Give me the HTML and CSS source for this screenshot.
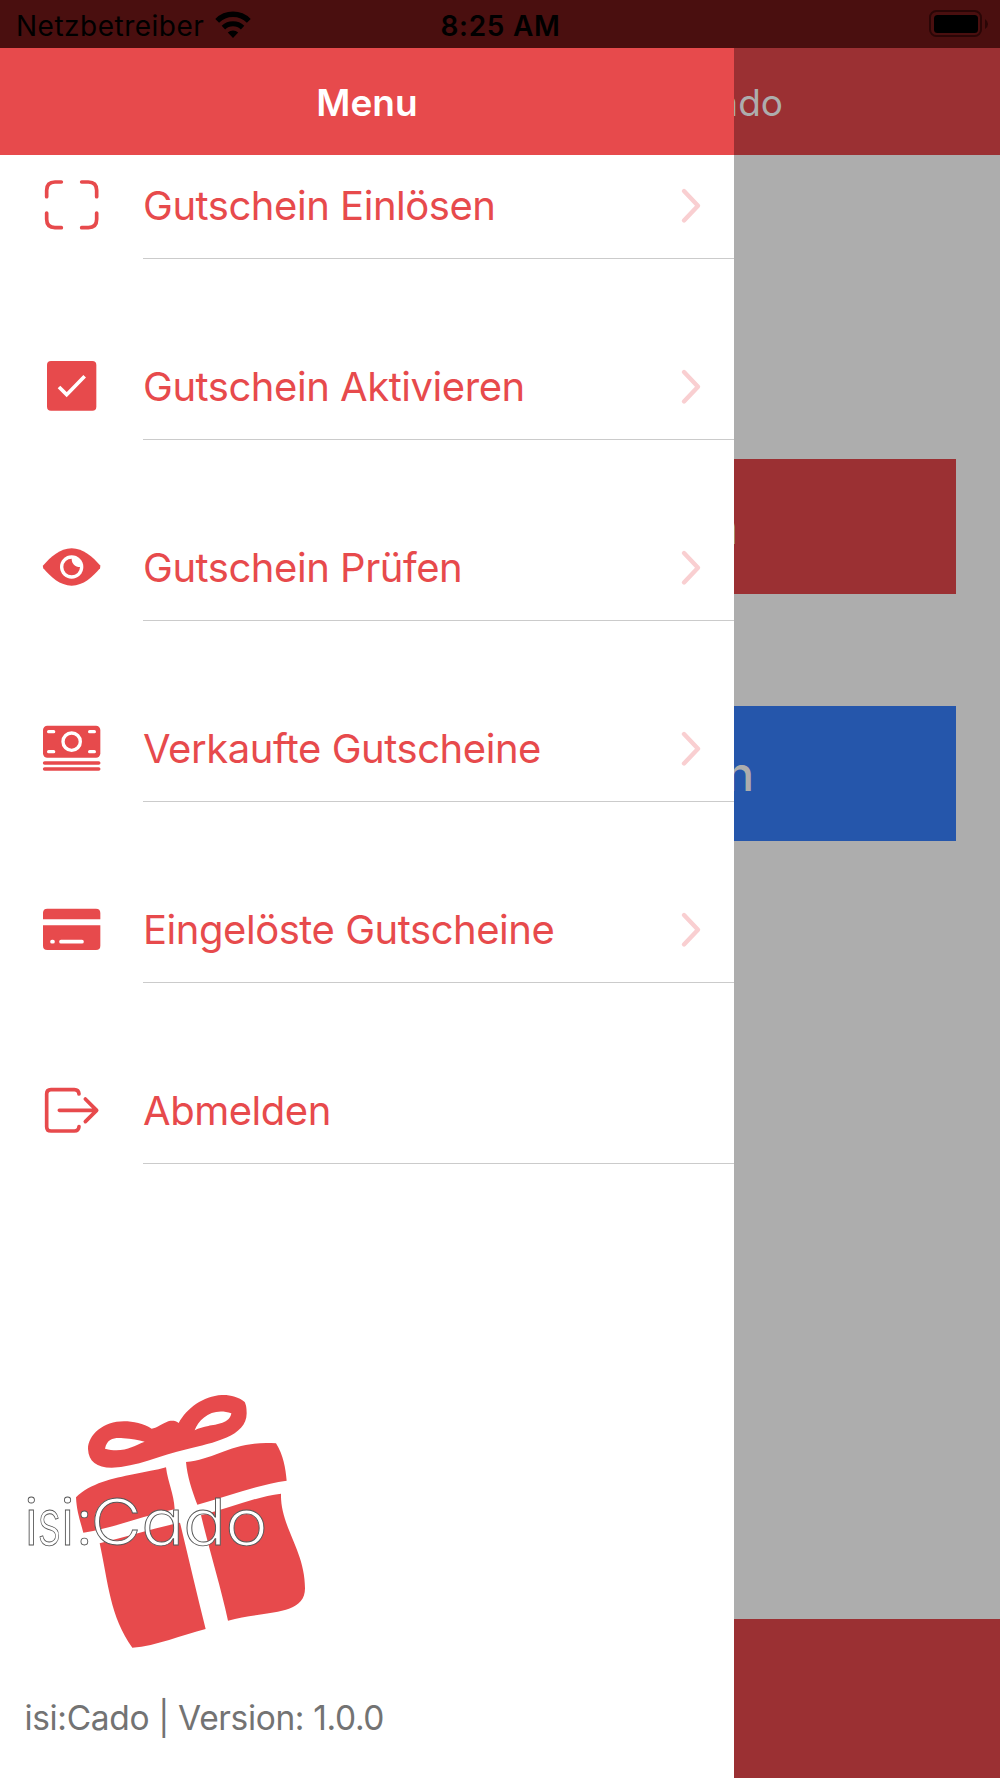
FILE: index.html
```
<!DOCTYPE html>
<html lang="de">
<head>
<meta charset="UTF-8">
<meta name="viewport" content="width=device-width, initial-scale=1.0">
<title>isi:Cado</title>
<link rel="stylesheet" href="styles.css">
</head>
<body>

<div class="statusbar">
    <div class="carrier">
        <span class="carrier-name">Netzbetreiber</span>
        <svg class="wifi" viewBox="0 0 36 27">
            <path d="M2.2 9.8a22.5 22.5 0 0 1 31.6 0" fill="none" stroke="#000" stroke-width="5.4"/>
            <path d="M8.4 16.6a14 14 0 0 1 19.2 0" fill="none" stroke="#000" stroke-width="5"/>
            <path d="M18 27l-5.2-5.4a7.6 7.6 0 0 1 10.4 0z"/>
        </svg>
    </div>
    <span class="clock">8:25 AM</span>
    <svg class="battery" viewBox="0 0 60 28">
        <rect x="1" y="1" width="51" height="25" rx="6.5" fill="none" stroke="#2a0606" stroke-width="2"/>
        <rect x="5" y="5" width="44" height="18" rx="3.5"/>
        <path d="M56 9v10q3-2 3-5t-3-5z" fill="#2a0606"/>
    </svg>
</div>

<div class="app">
    <div class="menu">
        <div class="menu-header">Menu</div>

        <ul class="menu-list">
            <li class="item">
                <svg class="icon" viewBox="120 53 192 192">
                    <path class="line" d="M140 124v-19q0-25 25-25h19M245 80h20q25 0 25 25v19M290 173v19q0 25-25 25h-20M184 217h-19q-25 0-25-25v-19"/>
                </svg>
                <div class="label"><span>Gutschein Einlösen</span><svg class="chevron" viewBox="0 0 24 40"><path d="M5 5l14 14.7L5 34.5"/></svg></div>
            </li>
            <li class="item">
                <svg class="icon" viewBox="120 596 192 192">
                    <rect x="141" y="617" width="148" height="149" rx="12"/>
                    <path class="cut" stroke-width="11" d="M177 695l23 23 54-55"/>
                </svg>
                <div class="label"><span>Gutschein Aktivieren</span><svg class="chevron" viewBox="0 0 24 40"><path d="M5 5l14 14.7L5 34.5"/></svg></div>
            </li>
            <li class="item">
                <svg class="icon" viewBox="120 44 192 192">
                    <path d="M130 135C152 110 180 84 215 84s63 26 85 51q2 5 0 9c-22 26-50 52-85 52s-63-26-85-52q-3-4 0-9z"/>
                    <circle cx="215" cy="140" r="35" fill="#fff"/>
                    <path d="M215 115c0 15 10 25 25 25a25 25 0 1 1-25-25z"/>
                </svg>
                <div class="label"><span>Gutschein Prüfen</span><svg class="chevron" viewBox="0 0 24 40"><path d="M5 5l14 14.7L5 34.5"/></svg></div>
            </li>
            <li class="item">
                <svg class="icon" viewBox="120 587 192 192">
                    <rect x="129" y="616" width="172" height="96" rx="13"/>
                    <circle cx="215" cy="664" r="26" fill="none" stroke="#fff" stroke-width="10"/>
                    <path class="cut" stroke-width="10" stroke-linecap="round" d="M146 634h15M269 634h14M146 694h15M269 694h14"/>
                    <path class="line" d="M134 728h162M134 746h162"/>
                </svg>
                <div class="label"><span>Verkaufte Gutscheine</span><svg class="chevron" viewBox="0 0 24 40"><path d="M5 5l14 14.7L5 34.5"/></svg></div>
            </li>
            <li class="item">
                <svg class="icon" viewBox="120 50 192 192">
                    <path d="M129 117V98q0-13 13-13h146q13 0 13 13v19zM129 135h172v61q0 13-13 13H142q-13 0-13-13z"/>
                    <path class="cut" stroke-width="11" stroke-linecap="round" d="M156 184h3M183 184h63"/>
                </svg>
                <div class="label"><span>Eingelöste Gutscheine</span><svg class="chevron" viewBox="0 0 24 40"><path d="M5 5l14 14.7L5 34.5"/></svg></div>
            </li>
            <li class="item">
                <svg class="icon" viewBox="120 594 192 192">
                    <path class="line" d="M237 642q-1-13-14-13h-70q-13 0-13 13v98q0 13 13 13h70q13 0 14-13M178 691h110M256 657l34 34-34 34"/>
                </svg>
                <div class="label"><span>Abmelden</span></div>
            </li>
        </ul>

        <svg class="logo" viewBox="0 0 1020 900">
            <!-- bow -->
            <path fill-rule="evenodd" d="M455 176C430 160 400 154 372 154C310 154 264 195 264 237C266 275 290 293 335 293C410 292 480 255 560 238C640 218 740 200 740 130C740 112 738 105 734 96C715 80 690 74 665 75C610 78 560 115 536 159C526 150 508 152 500 156C482 163 470 174 455 176Z
                M315 236C322 204 345 203 370 205C395 206 415 210 434 215C400 228 370 250 315 236Z
                M584 181C596 145 640 110 694 130C690 160 650 163 625 168C610 171 597 174 584 181Z"/>
            <!-- lid -->
            <path d="M228 382C270 340 340 325 400 313C435 305 470 301 498 292C504 340 522 370 524 418C430 437 350 472 250 488C240 450 230 425 228 382Z"/>
            <path d="M558 276C650 268 700 210 828 220C850 255 857 295 860 332C770 345 680 380 592 404C575 360 562 320 558 276Z"/>
            <!-- box -->
            <path d="M299 520C380 500 460 475 540 458C565 560 590 670 617 777C545 795 470 828 397 833C330 740 325 640 299 520Z"/>
            <path d="M603 436C690 415 765 380 843 371C840 470 915 540 915 655C915 740 790 722 684 752C662 650 628 540 603 436Z"/>
            <text class="logo-text" y="524"><tspan x="71">i</tspan><tspan x="112" textLength="72" lengthAdjust="spacingAndGlyphs">s</tspan><tspan x="180">i</tspan><tspan x="226">:</tspan><tspan x="271" textLength="154" lengthAdjust="spacingAndGlyphs">C</tspan><tspan x="423" textLength="130" lengthAdjust="spacingAndGlyphs">a</tspan><tspan x="549" textLength="130" lengthAdjust="spacingAndGlyphs">d</tspan><tspan x="676" textLength="128" lengthAdjust="spacingAndGlyphs">o</tspan></text>
        </svg>

        <div class="version"><span>isi:Cado | Version: 1.0.0</span></div>
    </div>

    <div class="page">
        <div class="page-header"><span>isi:Cado</span></div>
        <div class="page-content">
            <div class="button red"><span>n</span></div>
            <div class="button blue"><span>n</span></div>
        </div>
        <div class="page-footer"></div>
    </div>
</div>

</body>
</html>
```
FILE: styles.css
```
* {
    box-sizing: border-box;
}
body {
    margin: 0;
    width: 1000px;
    height: 1778px;
    overflow: hidden;
    font-family: Inter, "Liberation Sans", sans-serif;
    background-color: #fff;
}

/* Status bar */
.statusbar {
    display: grid;
    grid-template-columns: 1fr auto 1fr;
    align-items: center;
    height: 48px;
    padding: 0 11px 0 16px;
    background-color: #4a0f0f;
    color: #000;
    font-size: 28px;
}
.carrier {
    display: flex;
    align-items: center;
    gap: 11px;
}
.carrier-name {
    padding-top: 3px;
    letter-spacing: 0.5px;
}
.wifi {
    width: 36px;
    height: 27px;
}
.clock {
    padding-top: 3px;
    margin-left: -4px;
    font-weight: 600;
    letter-spacing: 0.7px;
}
.battery {
    width: 60px;
    height: 28px;
    justify-self: end;
}

.app {
    display: flex;
    height: 1730px;
}

/* Side menu */
.menu {
    width: 734px;
    flex: none;
    display: flex;
    flex-direction: column;
}
.menu-header {
    height: 106.5px;
    flex: none;
    background-color: #e74a4c;
    color: #fff;
    font-size: 37px;
    font-weight: 600;
    line-height: 109px;
    text-align: center;
}
.menu-list {
    list-style-type: none;
    margin: 0;
    padding: 0;
    color: #e74a4c;
    font-size: 40px;
    letter-spacing: -0.46px;
}
.item {
    display: flex;
    align-items: center;
    height: 108px;
    margin-top: 73.1px;
    padding-left: 40px;
}
.item:first-child {
    margin-top: -4px;
}
.icon {
    width: 64px;
    height: 64px;
    margin-right: 39px;
    flex: none;
    fill: #e74a4c;
}
.line {
    fill: none;
    stroke: #e74a4c;
    stroke-width: 11;
    stroke-linecap: round;
    stroke-linejoin: round;
}
.cut {
    fill: none;
    stroke: #fff;
}
.label {
    flex: 1;
    height: 108px;
    display: flex;
    align-items: center;
    justify-content: space-between;
    padding: 2px 31px 0 0;
    border-bottom: 1px solid #cbcbcb;
}
.chevron {
    width: 24px;
    height: 40px;
    margin-top: 1px;
    fill: none;
    stroke: #f9cfd1;
    stroke-width: 4.4;
    stroke-linecap: round;
    stroke-linejoin: round;
}

/* Logo and version */
.logo {
    width: 340px;
    height: 300px;
    margin-top: 206px;
    flex: none;
    fill: #e74a4c;
}
.logo-text {
    font-size: 194px;
    font-weight: 340;
    font-feature-settings: "cv11";
    fill: #fff;
    stroke: #555;
    stroke-width: 2.6;
}
.version {
    padding: 28px 0 0 24.5px;
    color: #737373;
    font-size: 33.5px;
    line-height: 40px;
    letter-spacing: -0.35px;
}

/* Dimmed page behind the menu */
.page {
    flex: 1;
    display: flex;
    flex-direction: column;
    background-color: #adadad;
    color: #adadad;
    overflow: hidden;
}
.page-header {
    display: flex;
    justify-content: flex-end;
    height: 106.5px;
    width: 266px;
    padding-right: 217px;
    background-color: #9b3033;
    font-size: 37px;
    line-height: 109px;
}
.page-content {
    flex: 1;
    padding-top: 304.5px;
}
.button {
    display: flex;
    justify-content: flex-end;
    width: 222px;
    height: 135px;
    margin-bottom: 111.5px;
    font-size: 48px;
    font-weight: 500;
    line-height: 136px;
    overflow: hidden;
}
.red {
    padding-right: 218px;
    background-color: #9b3033;
}
.blue {
    padding-right: 202px;
    background-color: #2556ab;
}
.page-footer {
    height: 159.5px;
    background-color: #9b3033;
}
```
